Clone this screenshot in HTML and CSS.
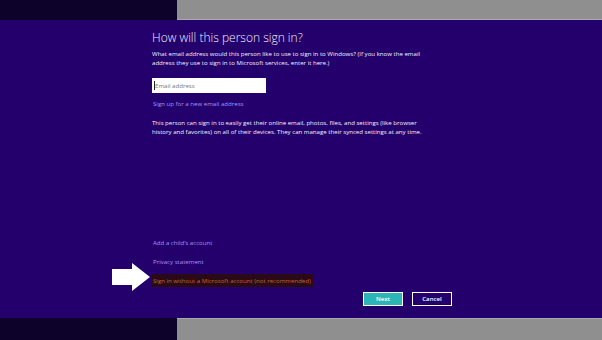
FILE: index.html
```html
<!DOCTYPE html>
<html>
<head>
<meta charset="utf-8">
<link rel="stylesheet" href="styles.css">
</head>
<body>
<div class="screen">
  <div class="bar top"><div class="dark"></div><div class="gray"></div></div>
  <div class="main">
    <div class="content">
      <h1 class="title">How will this person sign in?</h1>
      <p class="text">What email address would this person like to use to sign in to Windows? (If you know the email<br>address they use to sign in to Microsoft services, enter it here.)</p>
      <div class="input"><span class="caret"></span><span class="ph">Email address</span></div>
      <a class="link signup">Sign up for a new email address</a>
      <p class="text para">This person can sign in to easily get their online email, photos, files, and settings (like browser<br>history and favorites) on all of their devices. They can manage their synced settings at any time.</p>
      <div class="spacer"></div>
      <a class="link">Add a child’s account</a>
      <a class="link">Privacy statement</a>
      <div class="hl-row">
        <svg class="arrow" width="40" height="30" viewBox="0 0 40 30"><path d="M0 6 H20 V0 L38 14 L20 28 V22 H0 Z" fill="#fff"/></svg>
        <a class="link local">Sign in without a Microsoft account (not recommended)</a>
      </div>
      <div class="buttons">
        <button class="btn next">Next</button>
        <button class="btn cancel">Cancel</button>
      </div>
    </div>
  </div>
  <div class="bar bottom"><div class="dark"></div><div class="gray"></div></div>
</div>
</body>
</html>
```
FILE: styles.css
```css
html, body {
  margin: 0;
  padding: 0;
}
body {
  width: 602px;
  height: 340px;
  overflow: hidden;
  background: #23006c;
  font-family: "Open Sans", "Noto Sans", sans-serif;
}
.screen {
  display: flex;
  flex-direction: column;
  height: 340px;
}
.bar {
  display: flex;
}
.bar.top {
  height: 20px;
}
.bar.bottom {
  height: 22px;
}
.bar .dark {
  width: 177px;
  background: #0d0229;
}
.bar .gray {
  flex: 1;
  background: #8f8f8f;
}
.bar.top .gray {
  border-bottom: 1px solid #a8a8b0;
}
.bar.bottom .gray {
  border-top: 1px solid #a8a8b0;
}
.main {
  flex: 1;
  display: flex;
}
.content {
  display: flex;
  flex-direction: column;
  padding: 9px 0 12px 152px;
  width: 300px;
}
.title {
  margin: 0;
  font-weight: 300;
  font-size: 12px;
  color: #f2f0ff;
  line-height: 17px;
}
.text {
  margin: 4px 0 0;
  font-size: 6.1px;
  line-height: 8.5px;
  color: #f4f2ff;
  white-space: nowrap;
}
.input {
  margin-top: 11px;
  width: 114px;
  height: 15px;
  background: #fff;
  display: flex;
  align-items: center;
  padding-left: 2px;
  box-sizing: border-box;
}
.caret {
  width: 1px;
  height: 9px;
  background: #222;
}
.ph {
  font-size: 6.1px;
  color: #777;
}
.link {
  display: block;
  font-size: 6.1px;
  color: #a594ff;
  line-height: 9px;
  padding-left: 1px;
}
.signup {
  margin-top: 6px;
}
.para {
  margin-top: 11px;
}
.spacer {
  flex: 1;
}
.link + .link {
  margin-top: 10px;
}
.hl-row {
  position: relative;
  margin-top: 0;
}
.local {
  display: inline-block;
  background: #2a0a16;
  color: #c4672a;
  padding: 2px 2px 2px 1px;
  line-height: 9px;
}
.arrow {
  position: absolute;
  left: -40px;
  top: -3px;
}
.buttons {
  display: flex;
  justify-content: flex-end;
  gap: 9px;
  margin-top: 4px;
}
.btn {
  height: 14px;
  width: 40px;
  border: 1px solid #fff;
  font-family: "Open Sans", "Noto Sans", sans-serif;
  font-size: 6.1px;
  font-weight: 600;
  color: #fff;
  padding: 0;
  line-height: 12px;
}
.next {
  background: #2bb5b6;
}
.cancel {
  background: transparent;
}
```
